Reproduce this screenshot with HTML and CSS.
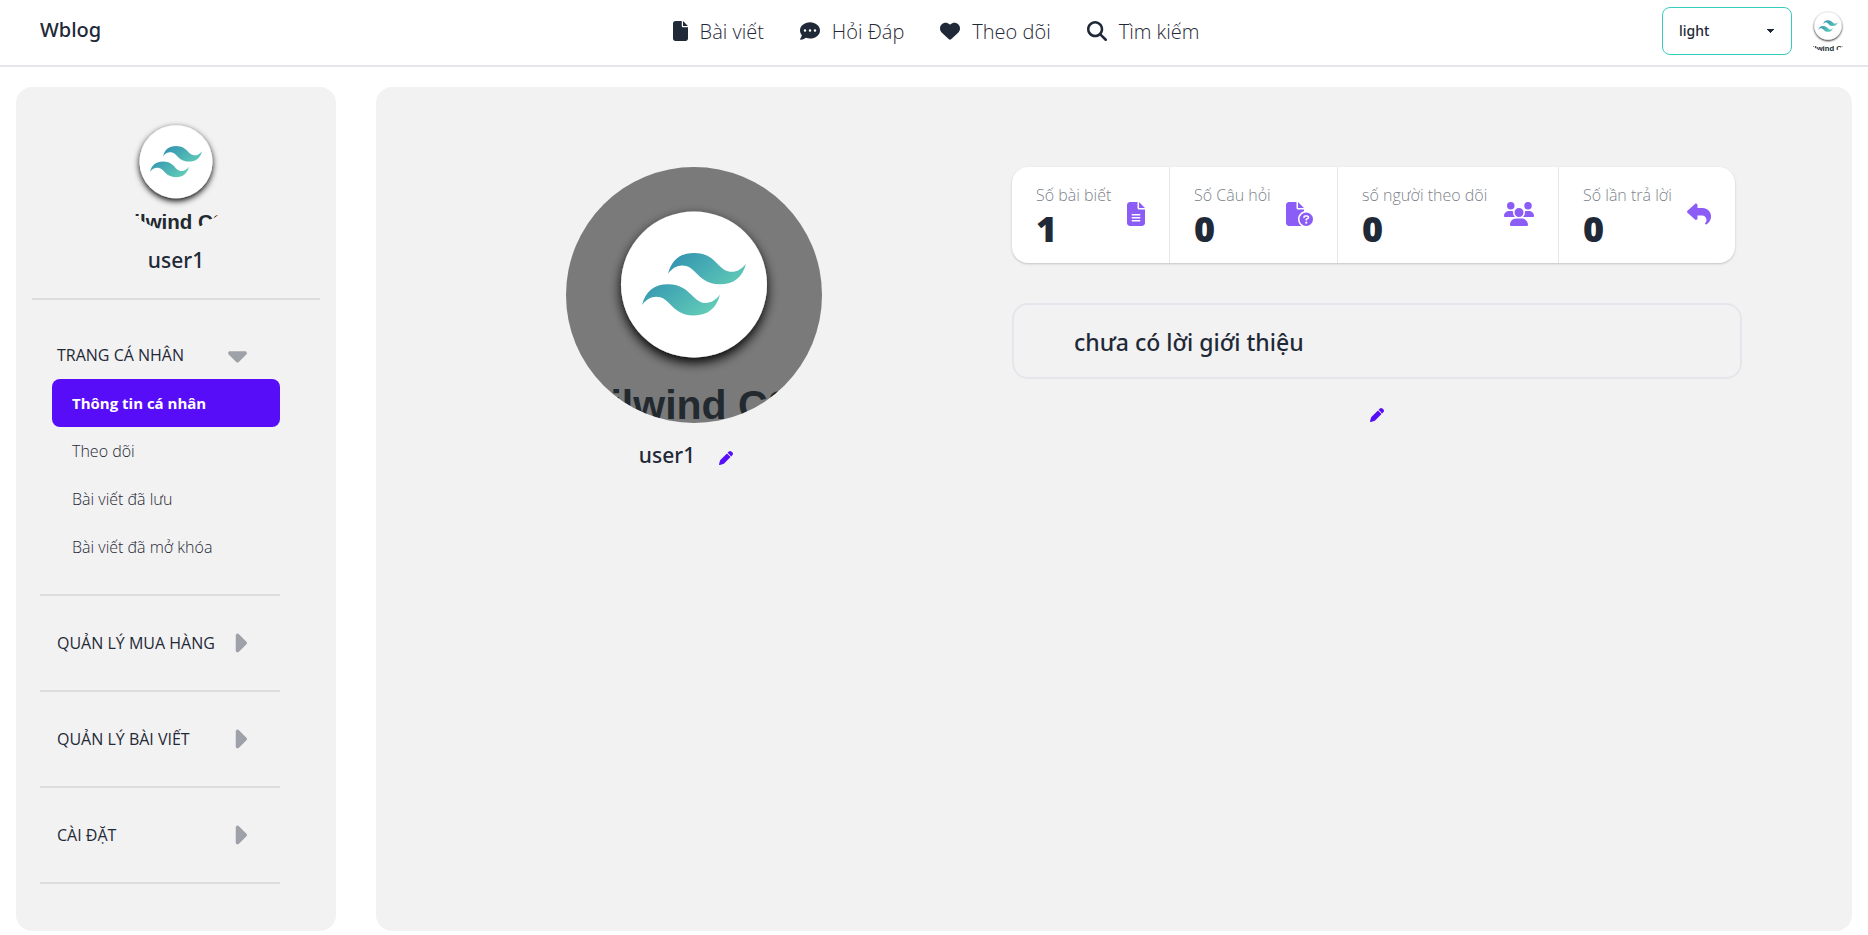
FILE: index.html
```html
<!DOCTYPE html>
<html lang="vi">
<head>
<meta charset="utf-8">
<meta name="viewport" content="width=device-width, initial-scale=1">
<title>Wblog</title>
<link rel="stylesheet" href="styles.css">
</head>
<body>
<svg class="sprite" aria-hidden="true">
  <defs>
    <linearGradient id="wave" gradientUnits="userSpaceOnUse" x1="6" y1="-4" x2="40" y2="36">
      <stop offset="0" stop-color="#2383ae"/>
      <stop offset="1" stop-color="#6dd7b9"/>
    </linearGradient>
    <filter id="drop" x="-30%" y="-30%" width="160%" height="160%">
      <feDropShadow dx="0" dy="5" stdDeviation="6" flood-color="#000" flood-opacity="1"/>
    </filter>
    <clipPath id="round"><circle cx="128" cy="128" r="128"/></clipPath>
    <symbol id="tailwind" viewBox="0 0 256 256">
      <g clip-path="url(#round)">
        <circle cx="128" cy="117.5" r="73" fill="#fff" filter="url(#drop)"/>
        <path transform="translate(76 86) scale(1.926)" fill="url(#wave)" d="M27 0c-7.2 0-11.7 3.6-13.5 10.8 2.7-3.6 5.85-4.95 9.45-4.05 2.054.513 3.522 2.004 5.147 3.653C30.744 13.09 33.808 16.2 40.5 16.2c7.2 0 11.7-3.6 13.5-10.8-2.7 3.6-5.85 4.95-9.45 4.05-2.054-.513-3.522-2.004-5.147-3.653C36.756 3.11 33.692 0 27 0zM13.5 16.2C6.3 16.2 1.8 19.8 0 27c2.7-3.6 5.85-4.95 9.45-4.05 2.054.514 3.522 2.004 5.147 3.653C17.244 29.29 20.308 32.4 27 32.4c7.2 0 11.7-3.6 13.5-10.8-2.7 3.6-5.85 4.95-9.45 4.05-2.054-.513-3.522-2.004-5.147-3.653C23.256 19.31 20.192 16.2 13.5 16.2z"/>
        <text class="logo-text" x="128" y="252" text-anchor="middle">Tailwind CSS</text>
      </g>
    </symbol>
    <symbol id="pen" viewBox="0 0 512 512"><path d="M362.7 19.3L314.3 67.7 444.3 197.7l48.4-48.4c25-25 25-65.5 0-90.5L453.3 19.3c-25-25-65.5-25-90.5 0zm-71 71L58.6 323.5c-10.4 10.4-18 23.3-22.2 37.4L1 481.2C-1.5 489.7 .8 498.8 7 505s15.3 8.5 23.7 6.1l120.3-35.4c14.1-4.2 27-11.8 37.4-22.2L421.7 220.3 291.7 90.3z"/></symbol>
    <symbol id="caret-right" viewBox="0 0 256 512"><path d="M246.6 278.6c12.5-12.5 12.5-32.8 0-45.3l-128-128c-9.2-9.2-22.9-11.9-34.9-6.9s-19.8 16.6-19.8 29.6l0 256c0 12.9 7.8 24.6 19.8 29.6s25.7 2.2 34.9-6.9l128-128z"/></symbol>
  </defs>
</svg>

<header class="header">
  <a class="brand" href="#">Wblog</a>
  <nav class="nav" aria-label="Chính">
    <a class="nav-link" href="#"><svg class="icon" viewBox="0 0 384 512"><path d="M0 64C0 28.7 28.7 0 64 0H224V128c0 17.7 14.3 32 32 32H384V448c0 35.3-28.7 64-64 64H64c-35.3 0-64-28.7-64-64V64zm384 64H256V0L384 128z"/></svg>Bài viết</a>
    <a class="nav-link" href="#"><svg class="icon" viewBox="0 0 512 512"><path d="M256 448c141.4 0 256-93.1 256-208S397.4 32 256 32S0 125.1 0 240c0 45.1 17.7 86.8 47.7 120.9c-1.9 24.5-11.4 46.3-21.4 62.9c-5.5 9.2-11.1 16.6-15.2 21.6c-2.1 2.5-3.7 4.4-4.9 5.7c-.6 .6-1 1.1-1.3 1.4l-.3 .3c-4.6 4.6-5.9 11.4-3.4 17.4c2.5 6 8.3 9.9 14.8 9.9c28.7 0 57.6-8.9 81.6-19.3c22.9-10 42.4-21.9 54.3-30.6c31.8 11.5 67 17.9 104.1 17.9zM128 208a32 32 0 1 1 0 64 32 32 0 1 1 0-64zm128 0a32 32 0 1 1 0 64 32 32 0 1 1 0-64zm96 32a32 32 0 1 1 64 0 32 32 0 1 1 -64 0z"/></svg>Hỏi Đáp</a>
    <a class="nav-link" href="#"><svg class="icon" viewBox="0 0 512 512"><path d="M47.6 300.4L228.3 469.1c7.5 7 17.4 10.9 27.7 10.9s20.2-3.9 27.7-10.9L464.4 300.4c30.4-28.3 47.6-68 47.6-109.5v-5.8c0-69.9-50.5-129.5-119.4-141C347 36.5 300.6 51.4 268 84L256 96 244 84c-32.6-32.6-79-47.5-124.6-39.9C50.5 55.6 0 115.2 0 185.1v5.8c0 41.5 17.2 81.2 47.6 109.5z"/></svg>Theo dõi</a>
    <a class="nav-link" href="#"><svg class="icon" viewBox="0 0 512 512"><path d="M416 208c0 45.9-14.9 88.3-40 122.7L502.6 457.4c12.5 12.5 12.5 32.8 0 45.3s-32.8 12.5-45.3 0L330.7 376c-34.4 25.2-76.8 40-122.7 40C93.1 416 0 322.9 0 208S93.1 0 208 0S416 93.1 416 208zM208 352a144 144 0 1 0 0-288 144 144 0 1 0 0 288z"/></svg>Tìm kiếm</a>
  </nav>
  <div class="tools">
    <select class="theme" aria-label="Giao diện"><option>light</option></select>
    <a class="account" href="#" aria-label="user1"><svg class="avatar"><use href="#tailwind"/></svg></a>
  </div>
</header>

<div class="layout">
  <aside class="sidebar">
    <div class="owner">
      <svg class="avatar avatar-md" role="img" aria-label="user1"><use href="#tailwind"/></svg>
      <h2 class="name">user1</h2>
    </div>
    <nav class="menu" aria-label="Trang cá nhân">
      <section class="group group-open">
        <button class="group-head" type="button" aria-expanded="true">TRANG CÁ NHÂN<svg class="caret" viewBox="0 0 320 512"><path d="M137.4 374.6c12.5 12.5 32.8 12.5 45.3 0l128-128c9.2-9.2 11.9-22.9 6.9-34.9s-16.6-19.8-29.6-19.8L32 192c-12.9 0-24.6 7.8-29.6 19.8s-2.2 25.7 6.9 34.9l128 128z"/></svg></button>
        <a class="item item-active" href="#">Thông tin cá nhân</a>
        <a class="item" href="#">Theo dõi</a>
        <a class="item" href="#">Bài viết đã lưu</a>
        <a class="item" href="#">Bài viết đã mở khóa</a>
      </section>
      <section class="group">
        <button class="group-head" type="button" aria-expanded="false">QUẢN LÝ MUA HÀNG<svg class="caret caret-side"><use href="#caret-right"/></svg></button>
      </section>
      <section class="group">
        <button class="group-head" type="button" aria-expanded="false">QUẢN LÝ BÀI VIẾT<svg class="caret caret-side"><use href="#caret-right"/></svg></button>
      </section>
      <section class="group">
        <button class="group-head" type="button" aria-expanded="false">CÀI ĐẶT<svg class="caret caret-side"><use href="#caret-right"/></svg></button>
      </section>
    </nav>
  </aside>

  <main class="main">
    <section class="profile">
      <svg class="avatar avatar-lg" role="img" aria-label="user1"><use href="#tailwind"/></svg>
      <div class="profile-name">
        <h1 class="name">user1</h1>
        <button class="edit" type="button" aria-label="Sửa tên"><svg class="pen"><use href="#pen"/></svg></button>
      </div>
    </section>
    <section class="details">
      <div class="stats">
        <div class="stat">
          <div><div class="stat-title">Số bài biết</div><div class="stat-value">1</div></div>
          <svg class="stat-icon" viewBox="0 0 384 512"><path d="M64 0C28.7 0 0 28.7 0 64V448c0 35.3 28.7 64 64 64H320c35.3 0 64-28.7 64-64V160H256c-17.7 0-32-14.3-32-32V0H64zM256 0V128H384L256 0zM112 256H272c8.8 0 16 7.2 16 16s-7.2 16-16 16H112c-8.8 0-16-7.2-16-16s7.2-16 16-16zm0 64H272c8.8 0 16 7.2 16 16s-7.2 16-16 16H112c-8.8 0-16-7.2-16-16s7.2-16 16-16zm0 64H272c8.8 0 16 7.2 16 16s-7.2 16-16 16H112c-8.8 0-16-7.2-16-16s7.2-16 16-16z"/></svg>
        </div>
        <div class="stat">
          <div><div class="stat-title">Số Câu hỏi</div><div class="stat-value">0</div></div>
          <svg class="stat-icon" viewBox="0 0 576 512"><path d="M0 64C0 28.7 28.7 0 64 0H224V128c0 17.7 14.3 32 32 32H384v38.6C310.1 219.5 256 287.4 256 368c0 59.1 29.1 111.3 73.7 143.3c-3.2 .5-6.4 .7-9.7 .7H64c-35.3 0-64-28.7-64-64V64zm384 64H256V0L384 128zm48 96a144 144 0 1 1 0 288 144 144 0 1 1 0-288zm0 240a24 24 0 1 0 0-48 24 24 0 1 0 0 48zM368 321.6V328c0 8.8 7.2 16 16 16s16-7.2 16-16v-6.4c0-5.3 4.3-9.6 9.6-9.6h40.5c7.7 0 13.9 6.2 13.9 13.9c0 5.2-2.9 9.9-7.4 12.3l-32 16.8c-5.3 2.8-8.6 8.2-8.6 14.2V384c0 8.8 7.2 16 16 16s16-7.2 16-16v-5.1l23.5-12.3c15.1-7.9 24.5-23.6 24.5-40.6c0-25.4-20.6-45.9-45.9-45.9H409.6c-23 0-41.6 18.6-41.6 41.6z"/></svg>
        </div>
        <div class="stat">
          <div><div class="stat-title">số người theo dõi</div><div class="stat-value">0</div></div>
          <svg class="stat-icon" viewBox="0 0 640 512"><path d="M144 0a80 80 0 1 1 0 160A80 80 0 1 1 144 0zM512 0a80 80 0 1 1 0 160A80 80 0 1 1 512 0zM0 298.7C0 239.8 47.8 192 106.7 192h42.7c15.9 0 31 3.5 44.6 9.7c-1.3 7.2-1.9 14.7-1.9 22.3c0 38.2 16.8 72.5 43.3 96H21.3C9.6 320 0 310.4 0 298.7zM405.3 320h-.7c26.6-23.5 43.3-57.8 43.3-96c0-7.6-.7-15-1.9-22.3c13.6-6.3 28.7-9.7 44.6-9.7h42.7C592.2 192 640 239.8 640 298.7c0 11.8-9.6 21.3-21.3 21.3H405.3zM224 224a96 96 0 1 1 192 0 96 96 0 1 1 -192 0zM128 485.3C128 411.7 187.7 352 261.3 352H378.7C452.3 352 512 411.7 512 485.3c0 14.7-11.9 26.7-26.7 26.7H154.7c-14.7 0-26.7-11.9-26.7-26.7z"/></svg>
        </div>
        <div class="stat">
          <div><div class="stat-title">Số lần trả lời</div><div class="stat-value">0</div></div>
          <svg class="stat-icon" viewBox="0 0 512 512"><path d="M205 34.8c11.5 5.1 19 16.6 19 29.2v64H336c97.2 0 176 78.8 176 176c0 113.3-81.5 163.9-100.2 174.1c-2.5 1.4-5.3 1.9-8.1 1.9c-10.9 0-19.7-8.9-19.7-19.7c0-7.5 4.3-14.4 9.8-19.5c9.4-8.8 22.2-26.4 22.2-56.7c0-53-43-96-96-96H224v64c0 12.6-7.4 24.1-19 29.2s-25 3-34.4-5.4l-160-144C3.9 225.7 0 217.1 0 208s3.9-17.7 10.6-23.8l160-144c9.4-8.5 22.9-10.6 34.4-5.4z"/></svg>
        </div>
      </div>
      <p class="intro">chưa có lời giới thiệu</p>
      <button class="edit" type="button" aria-label="Sửa lời giới thiệu"><svg class="pen"><use href="#pen"/></svg></button>
    </section>
  </main>
</div>
</body>
</html>
```
FILE: styles.css
```css
:root {
  --ink: #1f2937;
  --panel: #f2f2f2;
  --line: #e5e6eb;
  --rule: #dddddd;
  --primary: #570df8;
}

* { box-sizing: border-box; }

body {
  margin: 0;
  color: var(--ink);
  background: #fff;
  font: 300 16px/24px "Open Sans", "Noto Sans", sans-serif;
}

h1, h2, p { margin: 0; }
a { color: inherit; text-decoration: none; }

button {
  padding: 0;
  border: 0;
  background: none;
  color: inherit;
  font: inherit;
  cursor: pointer;
}

svg { display: block; flex: none; fill: currentColor; }

.sprite { position: absolute; width: 0; height: 0; }
.logo-text { font: 700 41px "Liberation Sans", Arial, sans-serif; fill: #22292f; }

.header {
  display: grid;
  grid-template-columns: 1fr auto 1fr;
  align-items: start;
  padding: 0 16px 0 20px;
  border-bottom: 2px solid var(--line);
}

.brand {
  padding: 16px 0 0 20px;
  font: 500 20px/28px "Noto Sans", "Open Sans", sans-serif;
}

.nav { display: flex; gap: 36px; padding-top: 18px; }

.nav-link {
  display: flex;
  gap: 12px;
  font-size: 20px;
  line-height: 28px;
}

.icon { height: 20px; margin-top: 3px; }

.tools {
  display: flex;
  gap: 12px;
  justify-content: flex-end;
  padding-top: 4px;
}

.theme {
  appearance: none;
  width: 130px;
  height: 48px;
  margin: 3px 0 10px;
  padding: 0 40px 0 16px;
  border: 1px solid #37cdbe;
  border-radius: 8px;
  color: inherit;
  font: 500 14px/24px "Noto Sans", "Open Sans", sans-serif;
  background-color: #fff;
  background-image:
    linear-gradient(45deg, transparent 50%, currentColor 50%),
    linear-gradient(135deg, currentColor 50%, transparent 50%);
  background-position: right 20px center, right 16px center;
  background-size: 4px 4px;
  background-repeat: no-repeat;
}

.avatar { width: 48px; height: 48px; border-radius: 50%; }
.avatar-md { width: 128px; height: 128px; }
.avatar-lg { width: 256px; height: 256px; background: #7a7a7a; }

.layout {
  display: grid;
  grid-template-columns: 320px 1fr;
  gap: 40px;
  padding: 20px 16px 4px;
}

.sidebar {
  padding: 16px 16px 47px;
  border-radius: 16px;
  background: var(--panel);
}

.owner {
  display: flex;
  flex-direction: column;
  align-items: center;
  gap: 13px;
  padding-bottom: 22px;
  border-bottom: 2px solid var(--rule);
}

.name { font: 500 21px/32px "Noto Sans", "Open Sans", sans-serif; }

.menu { padding: 32px 40px 0 8px; }

.group {
  padding: 35px 0 35px 12px;
  border-bottom: 2px solid var(--rule);
}

.group-open { padding: 11px 0 23px 12px; }

.group-head {
  display: flex;
  align-items: center;
  justify-content: space-between;
  width: 100%;
  padding: 0 33px 0 5px;
  font-weight: 400;
  text-align: left;
  white-space: nowrap;
}

.group-open .group-head { margin-bottom: 12px; }

.caret { width: 19px; height: 30px; margin: -3px 0; color: #9fa1a8; }
.caret-side { width: 15px; }

.item {
  display: block;
  padding: 12px 20px;
  border-radius: 8px;
}

.item-active { background: var(--primary); color: #fff; font-size: 15px; font-weight: 700; }

.main {
  display: grid;
  grid-template-columns: 636fr 730fr;
  padding: 80px 110px 80px 0;
  border-radius: 16px;
  background: var(--panel);
}

.profile, .details { display: flex; flex-direction: column; align-items: center; }
.profile { gap: 16px; }
.profile-name { display: flex; align-items: center; gap: 8px; }

.edit { padding: 0 16px; color: var(--primary); }
.pen { width: 14px; height: 14px; }
.profile-name .edit { padding-top: 6px; }
.details .edit { margin-top: 29px; }

.stats {
  display: grid;
  grid-template-columns: 158fr 168fr 221fr 176fr;
  align-self: stretch;
  margin-right: 7px;
  border-radius: 16px;
  background: #fff;
  box-shadow: 0 1px 3px rgba(0, 0, 0, 0.1), 0 1px 2px rgba(0, 0, 0, 0.1);
}

.stat {
  display: flex;
  align-items: center;
  justify-content: space-between;
  padding: 16px 24px;
  border-right: 1px solid var(--line);
  white-space: nowrap;
}

.stat:last-child { border-right: 0; }
.stat-title { color: #7d838c; }
.stat-value { padding-top: 4px; font-size: 36px; line-height: 36px; font-weight: 800; }
.stat-icon { height: 24px; margin-bottom: 2px; color: #8b5cf6; }

.intro {
  align-self: stretch;
  margin-top: 40px;
  padding: 21px 60px 19px;
  border: 2px solid var(--line);
  border-radius: 16px;
  font: 500 23px/32px "Noto Sans", "Open Sans", sans-serif;
}
```
